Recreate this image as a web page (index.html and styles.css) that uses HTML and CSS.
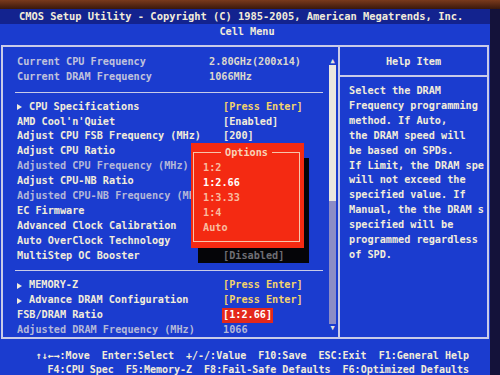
FILE: index.html
```html
<!DOCTYPE html>
<html lang="en">
<head>
  <meta charset="UTF-8" />
  <title>CMOS Setup Utility - Cell Menu</title>
  <link rel="stylesheet" href="styles.css">
</head>
<body>
  <div class="bezel"></div>

  <div class="screen">
    <div class="title">CMOS Setup Utility - Copyright (C) 1985-2005, American Megatrends, Inc.</div>
    <div class="menu-name">Cell Menu</div>

    <div class="frame">
      <div class="left">
        <div class="list">
          <div class="row info"><span class="label">Current CPU Frequency</span><span class="value">2.80GHz(200x14)</span></div>
          <div class="row info"><span class="label">Current DRAM Frequency</span><span class="value">1066MHz</span></div>
          <div class="sep"></div>

          <div class="row"><span class="label"><span class="arrow"></span>CPU Specifications</span><span class="value enter">[Press Enter]</span></div>
          <div class="row"><span class="label">AMD Cool'n'Quiet</span><span class="value">[Enabled]</span></div>
          <div class="row"><span class="label">Adjust CPU FSB Frequency (MHz)</span><span class="value">[200]</span></div>
          <div class="row"><span class="label">Adjust CPU Ratio</span></div>
          <div class="row dim"><span class="label">Adjusted CPU Frequency (MHz)</span></div>
          <div class="row"><span class="label">Adjust CPU-NB Ratio</span></div>
          <div class="row dim"><span class="label">Adjusted CPU-NB Frequency (MHz)</span></div>
          <div class="row"><span class="label">EC Firmware</span></div>
          <div class="row"><span class="label">Advanced Clock Calibration</span></div>
          <div class="row"><span class="label">Auto OverClock Technology</span></div>
          <div class="row"><span class="label">MultiStep OC Booster</span></div>
          <div class="sep"></div>

          <div class="row"><span class="label"><span class="arrow"></span>MEMORY-Z</span><span class="value enter">[Press Enter]</span></div>
          <div class="row"><span class="label"><span class="arrow"></span>Advance DRAM Configuration</span><span class="value enter">[Press Enter]</span></div>
          <div class="row"><span class="label">FSB/DRAM Ratio</span><span class="value selected">[1:2.66]</span></div>
          <div class="row dim"><span class="label">Adjusted DRAM Frequency (MHz)</span><span class="value">1066</span></div>
        </div>

        <div class="scroll">
          <span class="scroll-arrow">&#9650;</span>
          <div class="thumb"></div>
          <div class="track"></div>
          <span class="scroll-arrow">&#9660;</span>
        </div>
      </div>

      <div class="help">
        <div class="help-head">Help Item</div>
        <div class="help-text">Select the DRAM
Frequency programming
method. If Auto,
the DRAM speed will
be based on SPDs.
If Limit, the DRAM spe
will not exceed the
specified value. If
Manual, the the DRAM s
specified will be
programmed regardless
of SPD.</div>
      </div>

      <!-- options popup over the list -->
      <div class="shadow"><span>[Disabled]</span></div>
      <div class="popup">
        <div class="popup-inner">
          <div class="popup-title"><span>Options</span></div>
          <div class="opt">1:2</div>
          <div class="opt current">1:2.66</div>
          <div class="opt">1:3.33</div>
          <div class="opt">1:4</div>
          <div class="opt">Auto</div>
        </div>
      </div>
    </div>

    <div class="keys">
      <div class="key-line">&#8593;&#8595;&#8592;&#8594;:Move  Enter:Select  +/-/:Value  F10:Save  ESC:Exit  F1:General Help</div>
      <div class="key-line">F4:CPU Spec  F5:Memory-Z  F8:Fail-Safe Defaults  F6:Optimized Defaults</div>
    </div>
  </div>
</body>
</html>
```

FILE: styles.css
```css
body {
  margin: 0;
  width: 500px;
  height: 375px;
  overflow: hidden;
  background: #14123a;
  font-family: "DejaVu Sans Mono", "Liberation Mono", monospace;
  font-weight: bold;
  font-size: 10.2px;
  color: #f2ecda;
}

.bezel {
  height: 9px;
  background: linear-gradient(#7a3a1c, #3a180c);
}

.screen {
  width: 490px;
  height: 366px;
  background: #1b3ccf;
}

.title {
  height: 15px;
  line-height: 15px;
  padding-left: 19px;
  font-size: 10.4px;
  background: #13238f;
  white-space: pre;
}

.menu-name {
  height: 15px;
  line-height: 15px;
  text-align: center;
  padding-left: 4px;
}

.frame {
  position: relative;
  margin: 6px 0 0 1px;
  width: 484px;
  height: 290px;
  border: 2px solid #c9cbe8;
  display: grid;
  grid-template-columns: 335px 1fr;
}

/* left side: settings list + scrollbar */
.left {
  display: flex;
}

.list {
  flex: 1;
  padding: 8px 0 0 14px;
}

.row {
  display: flex;
  height: 14.9px;
  line-height: 14.9px;
  white-space: pre;
}

.row .label {
  width: 206px;
  overflow: hidden;
}

.row.info .label {
  width: 192px;
  color: #c0c2dc;
}

.row.info .value {
  color: #dcd8cc;
}

.row.dim .label,
.row.dim .value {
  color: #b4b8d8;
}

.arrow {
  display: inline-block;
  width: 0;
  height: 0;
  border-left: 5px solid #f2ecda;
  border-top: 3.5px solid transparent;
  border-bottom: 3.5px solid transparent;
  margin: 0 7px 0 0;
  vertical-align: -0.5px;
}

.value.enter {
  color: #f4d46c;
}

.value.selected {
  background: #e4281c;
  color: #ffffff;
  padding: 0 1px;
  margin-left: -1px;
}

.sep {
  height: 14.9px;
  margin-left: -2px;
  width: 308px;
  background: linear-gradient(transparent 7px, #c9cbe8 7px, #c9cbe8 8px, transparent 8px);
}

.scroll {
  width: 7px;
  margin: 10px 2px 6px 0;
  display: flex;
  flex-direction: column;
  align-items: center;
}

.scroll-arrow {
  font-size: 7px;
  line-height: 8px;
  color: #e8e4dc;
}

.thumb {
  width: 7px;
  height: 136px;
  background: #ebe7df;
}

.track {
  width: 7px;
  flex: 1;
  background: #8c8cc6;
}

/* right side: help */
.help {
  border-left: 2px solid #c9cbe8;
}

.help-head {
  height: 28px;
  line-height: 30px;
  text-align: center;
  border-bottom: 2px solid #c9cbe8;
}

.help-text {
  padding: 7px 0 0 9px;
  line-height: 14.9px;
  white-space: pre;
}

/* popup */
.shadow {
  position: absolute;
  left: 195px;
  top: 111px;
  width: 111px;
  height: 105px;
  background: #050508;
  display: flex;
  align-items: flex-end;
}

.shadow span {
  padding: 0 0 0 25px;
  line-height: 14px;
  color: #6e6e74;
}

.popup {
  position: absolute;
  left: 188px;
  top: 96px;
  width: 113px;
  height: 105px;
  box-sizing: border-box;
  padding: 9px 4px 6px 2px;
  background: #f42a12;
}

.popup-inner {
  height: 100%;
  box-sizing: border-box;
  border: 1px solid #f7c4aa;
}

.popup-title {
  margin-top: -8px;
  height: 15px;
  line-height: 15px;
  text-align: center;
  color: #f8d2b8;
}

.popup-title span {
  background: #f42a12;
  padding: 0 4px;
}

.opt {
  height: 15px;
  line-height: 15px;
  padding-left: 9px;
  color: #f9bca0;
}

.opt.current {
  color: #ffffff;
}

/* key legend */
.keys {
  margin-top: 10px;
  padding-right: 21px;
  text-align: right;
  font-size: 10px;
}

.key-line {
  line-height: 13.5px;
  white-space: pre;
}
```
